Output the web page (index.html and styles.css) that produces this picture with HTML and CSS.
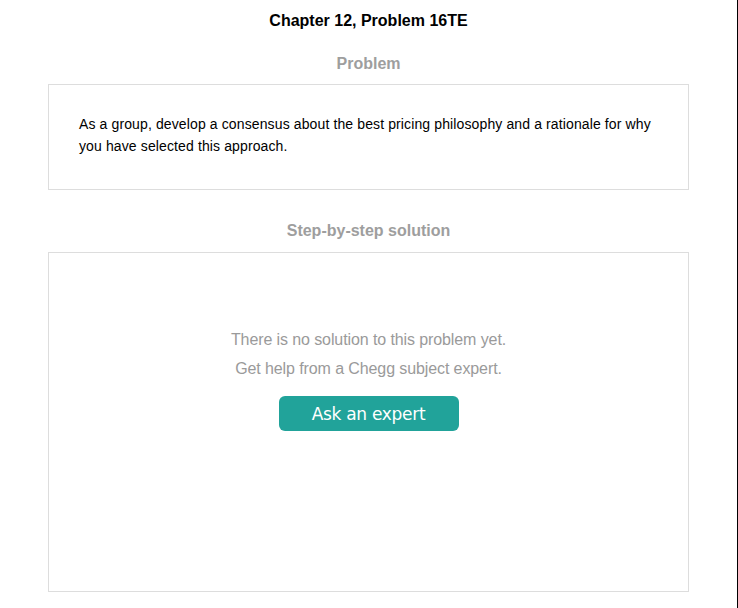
FILE: index.html
```html
<!DOCTYPE html>
<html>
<head>
<meta charset="utf-8">
<link rel="stylesheet" href="styles.css">
</head>
<body>
<div class="page">
  <h1 class="title">Chapter 12, Problem 16TE</h1>
  <h2 class="section-title">Problem</h2>
  <div class="card problem-card">
    <p class="problem-text">As a group, develop a consensus about the best pricing philosophy and a rationale for why you have selected this approach.</p>
  </div>
  <h2 class="section-title solution-title">Step-by-step solution</h2>
  <div class="card solution-card">
    <p class="no-solution">There is no solution to this problem yet.<br>Get help from a Chegg subject expert.</p>
    <button class="ask-btn" type="button">Ask an expert</button>
  </div>
</div>
</body>
</html>
```

FILE: styles.css
```css
html, body {
  margin: 0;
  padding: 0;
  background: #fff;
}
body {
  font-family: "Liberation Sans", Arial, sans-serif;
  color: #000;
}
.page {
  width: 737px;
  height: 608px;
  border-right: 1px solid #000;
  display: flex;
  flex-direction: column;
  align-items: center;
  box-sizing: content-box;
}
.title {
  margin: 11px 0 0;
  font-size: 16px;
  line-height: 20px;
  font-weight: bold;
}
.section-title {
  margin: 23px 0 0;
  font-size: 16px;
  line-height: 20px;
  font-weight: bold;
  color: #9e9e9e;
}
.solution-title {
  margin-top: 31px;
}
.card {
  box-sizing: border-box;
  width: 641px;
  border: 1px solid #dddddd;
  background: #fff;
}
.problem-card {
  margin-top: 10px;
  height: 106px;
  padding: 28px 30px 0;
}
.problem-text {
  margin: 0;
  font-size: 14px;
  line-height: 22px;
  letter-spacing: 0.12px;
}
.solution-card {
  margin-top: 11px;
  height: 340px;
  display: flex;
  flex-direction: column;
  align-items: center;
  padding-top: 72px;
}
.no-solution {
  margin: 0;
  text-align: center;
  font-size: 16px;
  line-height: 29px;
  letter-spacing: -0.1px;
  color: #9a9a9a;
}
.ask-btn {
  margin-top: 13px;
  width: 180px;
  height: 35px;
  border: none;
  border-radius: 6px;
  background: #21a39a;
  color: #fff;
  font-family: "DejaVu Sans", Tahoma, sans-serif;
  font-size: 17px;
  letter-spacing: -0.3px;
  padding: 0;
  cursor: pointer;
}
```
